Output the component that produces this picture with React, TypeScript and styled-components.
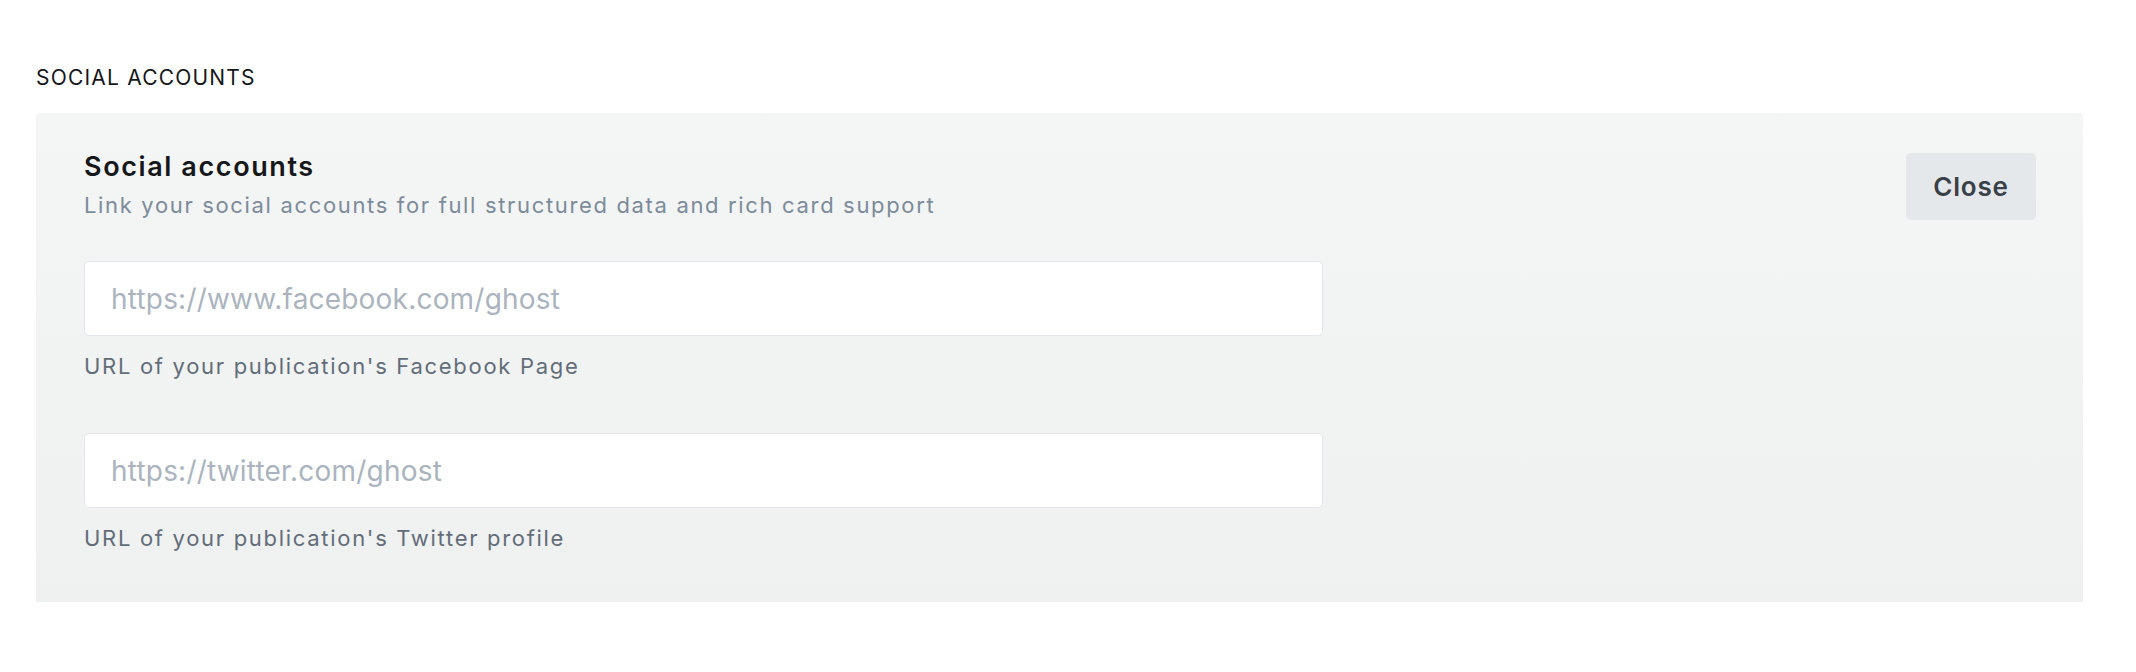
import React from 'react';
import styled, { createGlobalStyle } from 'styled-components';

const GlobalStyle = createGlobalStyle`
  html, body {
    margin: 0;
    padding: 0;
    background: #ffffff;
  }
  body {
    font-family: Inter, 'Noto Sans', 'Liberation Sans', sans-serif;
    -webkit-font-smoothing: antialiased;
  }
`;

const Page = styled.div`
  padding: 64px 53px 60px 36px;
`;

const SectionHeading = styled.h4`
  margin: 0 0 21px;
  font-size: 21px;
  line-height: 28px;
  font-weight: 400;
  letter-spacing: 1.2px;
  color: #15171a;
  text-transform: uppercase;
`;

const Block = styled.section`
  background: linear-gradient(to bottom, #f4f5f5, #eff0f0);
  border-radius: 4px 4px 0 0;
  padding: 36px 47px 49px 48px;
`;

const BlockHeader = styled.div`
  display: flex;
  justify-content: space-between;
  align-items: flex-start;
`;

const Title = styled.h3`
  margin: 0;
  font-size: 27px;
  line-height: 35px;
  font-weight: 600;
  letter-spacing: 1.6px;
  color: #15171a;
`;

const Description = styled.p`
  margin: 6px 0 0;
  font-size: 22px;
  line-height: 30px;
  letter-spacing: 1.66px;
  color: #7c8b9a;
`;

const CloseButton = styled.button`
  margin-top: 4px;
  width: 130px;
  height: 67px;
  border: none;
  border-radius: 5px;
  background: #e5e8eb;
  color: #394047;
  font-family: inherit;
  font-size: 26px;
  font-weight: 600;
  letter-spacing: 0.8px;
  cursor: pointer;
`;

const Fields = styled.div`
  display: flex;
  flex-direction: column;
  gap: 52px;
  margin-top: 41px;
`;

const Field = styled.div`
  display: flex;
  flex-direction: column;
  width: 1239px;
`;

const TextInput = styled.input`
  box-sizing: border-box;
  height: 75px;
  padding: 0 26px;
  border: 1px solid #e3e6ea;
  border-radius: 5px;
  background: #ffffff;
  font-family: inherit;
  font-size: 28px;
  letter-spacing: 0.2px;
  color: #15171a;
  outline: none;

  &::placeholder {
    color: #abb4be;
  }
`;

const Hint = styled.p`
  margin: 15px 0 0;
  font-size: 22px;
  line-height: 30px;
  letter-spacing: 1.7px;
  color: #626d79;
`;

const fields = [
  { placeholder: 'https://www.facebook.com/ghost', hint: "URL of your publication's Facebook Page" },
  { placeholder: 'https://twitter.com/ghost', hint: "URL of your publication's Twitter profile" },
];

export default function App() {
  return (
    <>
      <GlobalStyle />
      <Page>
        <SectionHeading>Social accounts</SectionHeading>
        <Block>
          <BlockHeader>
            <div>
              <Title>Social accounts</Title>
              <Description>Link your social accounts for full structured data and rich card support</Description>
            </div>
            <CloseButton>Close</CloseButton>
          </BlockHeader>
          <Fields>
            {fields.map((f) => (
              <Field key={f.placeholder}>
                <TextInput type="text" placeholder={f.placeholder} />
                <Hint>{f.hint}</Hint>
              </Field>
            ))}
          </Fields>
        </Block>
      </Page>
    </>
  );
}
